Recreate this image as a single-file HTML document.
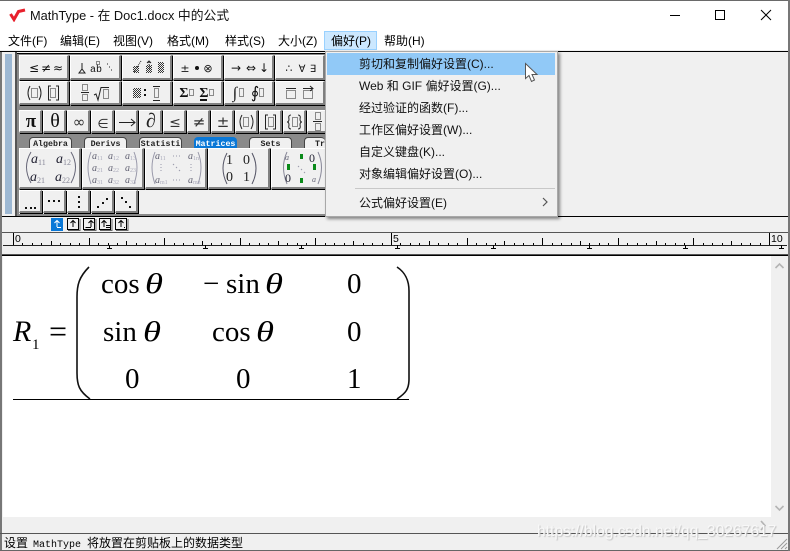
<!DOCTYPE html>
<html><head><meta charset="utf-8"><style>
html,body{margin:0;padding:0;width:790px;height:551px;overflow:hidden;background:#f0f0f0}
body{position:relative;font-family:"Liberation Sans","Noto Sans CJK SC",sans-serif;font-size:12px;color:#000}
.a{position:absolute}
.t{position:absolute;white-space:nowrap;line-height:16px}
.b{position:absolute;box-sizing:border-box;background:#f0f0f0;border-top:1px solid #fff;border-left:1px solid #fff;border-right:2px solid #808080;border-bottom:2px solid #808080;box-shadow:1px 1px 0 #000}
.tab{position:absolute;top:137px;height:11px;width:43px;box-sizing:border-box;background:#f0f0f0;border:1px solid #444;border-bottom:0;border-radius:4px 4px 0 0;font:bold 8.3px/13px "Liberation Mono",monospace;text-align:center;overflow:hidden;color:#222}
.m{position:absolute;left:359px;font-size:12px;line-height:18px;white-space:nowrap;color:#111}
</style></head><body>
<div class="a" style="left:0;top:0;width:790px;height:30px;background:#fff;border-top:1px solid #6a6a6a;box-sizing:border-box"></div>
<div class="a" style="left:0;top:30px;width:790px;height:20px;background:#fff"></div>
<svg class="a" style="left:8px;top:8px" width="18" height="14"><path d="M2.5 6 L6 11.5 L10.5 3.5 L17 2" fill="none" stroke="#e8202c" stroke-width="3"/></svg>
<div class="t" style="left:30px;top:8px;font-size:12.8px;color:#111">MathType - 在 Doc1.docx 中的公式</div>
<svg class="a" style="left:660px;top:5px" width="120" height="20"><path d="M10 10.5H20" stroke="#000" fill="none"/><rect x="55.5" y="5.5" width="9" height="9" fill="none" stroke="#000"/><path d="M101 5L111 15M111 5L101 15" stroke="#000" fill="none"/></svg>

<div class="t" style="left:8px;top:33px">文件(F)</div>
<div class="t" style="left:60px;top:33px">编辑(E)</div>
<div class="t" style="left:113px;top:33px">视图(V)</div>
<div class="t" style="left:167px;top:33px">格式(M)</div>
<div class="t" style="left:225px;top:33px">样式(S)</div>
<div class="t" style="left:278px;top:33px">大小(Z)</div>
<div class="a" style="left:324px;top:31px;width:53px;height:19px;background:#cce8ff;border:1px solid #99d1ff;box-sizing:border-box"></div>
<div class="t" style="left:331px;top:33px">偏好(P)</div>
<div class="t" style="left:384px;top:33px">帮助(H)</div>
<div class="a" style="left:0;top:51px;width:790px;height:1px;background:#000"></div>

<!-- toolbar -->
<div class="a" style="left:5px;top:54px;width:7px;height:160px;background:#9db8d3"></div>
<div class="a" style="left:15px;top:52px;width:2px;height:164px;background:#555"></div>
<div class="a" style="left:17px;top:53px;width:308px;height:163px;background:#8a8a8a;border-top:1px solid #000;box-sizing:border-box"></div>

<div class="b" style="left:19px;top:55px;width:50px;height:25px"></div>
<div class="b" style="left:70px;top:55px;width:51px;height:25px"></div>
<div class="b" style="left:122px;top:55px;width:50px;height:25px"></div>
<div class="b" style="left:173px;top:55px;width:50px;height:25px"></div>
<div class="b" style="left:224px;top:55px;width:50px;height:25px"></div>
<div class="b" style="left:275px;top:55px;width:50px;height:25px"></div>
<div class="b" style="left:19px;top:81px;width:50px;height:24px"></div>
<div class="b" style="left:70px;top:81px;width:51px;height:24px"></div>
<div class="b" style="left:122px;top:81px;width:50px;height:24px"></div>
<div class="b" style="left:173px;top:81px;width:50px;height:24px"></div>
<div class="b" style="left:224px;top:81px;width:50px;height:24px"></div>
<div class="b" style="left:275px;top:81px;width:50px;height:24px"></div>

<div class="b" style="left:19px;top:110px;width:23px;height:23px"></div>
<div class="b" style="left:43px;top:110px;width:23px;height:23px"></div>
<div class="b" style="left:67px;top:110px;width:23px;height:23px"></div>
<div class="b" style="left:91px;top:110px;width:23px;height:23px"></div>
<div class="b" style="left:115px;top:110px;width:23px;height:23px"></div>
<div class="b" style="left:139px;top:110px;width:23px;height:23px"></div>
<div class="b" style="left:163px;top:110px;width:23px;height:23px"></div>
<div class="b" style="left:187px;top:110px;width:23px;height:23px"></div>
<div class="b" style="left:211px;top:110px;width:23px;height:23px"></div>
<div class="b" style="left:235px;top:110px;width:23px;height:23px"></div>
<div class="b" style="left:259px;top:110px;width:23px;height:23px"></div>
<div class="b" style="left:283px;top:110px;width:23px;height:23px"></div>
<div class="b" style="left:307px;top:110px;width:18px;height:23px;border-right:0"></div>

<div class="tab" style="left:29px">Algebra</div>
<div class="tab" style="left:84px">Derivs</div>
<div class="tab" style="left:139px">Statisti</div>
<div class="tab" style="left:194px;background:#0a78d7;color:#fff;border-color:#0a78d7">Matrices</div>
<div class="tab" style="left:249px">Sets</div>
<div class="tab" style="left:304px;width:21px;border-right:0;text-align:left;padding-left:10px">Tr</div>

<div class="b" style="left:19px;top:148px;width:62px;height:41px"></div>
<div class="b" style="left:82px;top:148px;width:62px;height:41px"></div>
<div class="b" style="left:145px;top:148px;width:62px;height:41px"></div>
<div class="b" style="left:208px;top:148px;width:62px;height:41px"></div>
<div class="b" style="left:271px;top:148px;width:54px;height:41px;border-right:0"></div>

<div class="a" style="left:19px;top:190px;width:306px;height:24px;background:#f0f0f0"></div>
<div class="b" style="left:19px;top:190px;width:23px;height:23px"></div>
<div class="b" style="left:43px;top:190px;width:23px;height:23px"></div>
<div class="b" style="left:67px;top:190px;width:23px;height:23px"></div>
<div class="b" style="left:91px;top:190px;width:23px;height:23px"></div>
<div class="b" style="left:115px;top:190px;width:23px;height:23px"></div>

<svg class="a" style="left:0;top:0" width="330" height="220" font-family="DejaVu Sans,sans-serif" text-anchor="middle" fill="#111">
 <defs>
  <pattern id="h" width="2" height="2" patternUnits="userSpaceOnUse"><rect width="1" height="1" fill="#333"/><rect x="1" y="1" width="1" height="1" fill="#333"/></pattern>
 </defs>
 <!-- row 1 -->
 <g font-size="12">
  <text x="34" y="72">≤</text><text x="46" y="72">≠</text><text x="58" y="72">≈</text>
  <text x="185" y="72" font-size="11">±</text><circle cx="197" cy="68" r="2"/><text x="208" y="72" font-size="11">⊗</text>
  <text x="236" y="72">→</text><text x="251" y="72">⇔</text><text x="264" y="72">↓</text>
  <text x="289" y="72" font-size="11">∴</text><text x="302" y="72" font-size="10">∀</text><text x="313" y="72" font-size="10">∃</text>
 </g>
 <g fill="none" stroke="#222">
  <path d="M82 63V69M79 73H85L82 69Z"/><rect x="96.500" y="61.500" width="3" height="3" stroke-dasharray="1 1"/>
  <path d="M107 64h1M109 67h1M111 70h1"/>
  <path d="M141 61L134 72" stroke-dasharray="1 1"/><path d="M149 62V70" stroke-dasharray="1 1"/><path d="M147 63L149 61L151 63"/>
 </g>
 <text x="96" y="72" font-family="Liberation Mono,monospace" font-size="10">ab</text>
 <rect x="133" y="66" width="6" height="7" fill="url(#h)"/>
 <rect x="146" y="65" width="6" height="8" fill="url(#h)"/>
 <rect x="158" y="62" width="6" height="11" fill="url(#h)"/>
 <!-- row 2 -->
 <g fill="none" stroke="#222" stroke-dasharray="1 1">
  <rect x="31.500" y="88.500" width="6" height="9"/><rect x="50.500" y="88.500" width="5" height="9"/>
  <rect x="82.500" y="84.500" width="5" height="6"/><rect x="82.500" y="94.500" width="5" height="6"/>
  <rect x="103.500" y="89.500" width="5" height="9"/>
  <rect x="154.500" y="88.500" width="4" height="9"/>
  <rect x="189.500" y="89.500" width="4" height="6"/><rect x="209.500" y="89.500" width="4" height="6"/>
  <rect x="239.500" y="88.500" width="4" height="8"/><rect x="259.500" y="88.500" width="4" height="8"/>
  <rect x="286.500" y="90.500" width="9" height="8"/><rect x="303.500" y="90.500" width="9" height="8"/>
 </g>
 <g fill="none" stroke="#222">
  <path d="M30 86Q26 93 30 100M39 86Q43 93 39 100"/>
  <path d="M51 86H48.500V100H51M56 86H58.500V100H56"/>
  <path d="M81 92.500H89"/>
  <path d="M94 95L96 94L98 100L101 87.500H109"/>
  <path d="M153 86.500H160M153 100.500H160"/>
  <path d="M286 88.500H296M303 88.500H313M310 86L313 88.500L310 91"/>
 </g>
 <rect x="133" y="88" width="8" height="10" fill="url(#h)"/>
 <rect x="144" y="89" width="2" height="2"/><rect x="144" y="94" width="2" height="2"/>
 <g font-family="Liberation Serif,serif" font-weight="bold">
  <text x="184" y="97" font-size="14">Σ</text><text x="204" y="97" font-size="14">Σ</text>
 </g>
 <rect x="200" y="99" width="7" height="2"/>
 <g font-family="Liberation Serif,serif" font-size="16">
  <text x="235" y="98">∫</text><text x="255" y="98">∮</text>
 </g>
 <!-- row 3 -->
 <text x="31" y="127" font-family="Liberation Serif,serif" font-size="19" font-weight="bold">π</text>
 <text x="55" y="127" font-family="Liberation Serif,serif" font-size="20">θ</text>
 <text x="79" y="127" font-size="15" fill="#333">∞</text>
 <text x="103" y="128" font-size="13" fill="#333">∈</text>
 <path d="M119 122.500H135M131 119L135 122.500L131 126" fill="none" stroke="#222"/>
 <text x="151" y="127" font-family="Liberation Serif,serif" font-size="20" fill="#222">∂</text>
 <text x="175" y="127" font-size="14" fill="#333">≤</text>
 <text x="199" y="127" font-size="15" fill="#333">≠</text>
 <text x="223" y="127" font-size="15" fill="#333">±</text>
 <g fill="none" stroke="#222">
  <path d="M242 115Q238 122 242 129M251 115Q255 122 251 129"/>
  <path d="M268 115H265.500V129H268M273 115H275.500V129H273"/>
  <path d="M291 115Q288 115 289 119Q289 122 287 122Q289 122 289 125Q288 129 291 129M298 115Q301 115 300 119Q300 122 302 122Q300 122 300 125Q301 129 298 129"/>
  <path d="M313 121.500H322"/>
  <g stroke-dasharray="1 1"><rect x="243.500" y="117.500" width="5" height="9"/><rect x="268.500" y="117.500" width="5" height="9"/><rect x="292.500" y="117.500" width="5" height="9"/><rect x="315.500" y="112.500" width="5" height="7"/><rect x="315.500" y="123.500" width="5" height="7"/></g>
 </g>
 <!-- matrices -->
 <g font-family="Liberation Serif,serif" text-anchor="start">
  <path d="M31 152Q22 167 31 183M71 152Q80 167 71 183" fill="none" stroke="#667"/>
  <g fill="#223" font-size="14" font-style="italic">
   <text x="31" y="163">a</text><text x="56" y="163">a</text><text x="30" y="181">a</text><text x="55" y="181">a</text>
  </g>
  <g fill="#889" font-size="8">
   <text x="38" y="165">11</text><text x="63" y="165">12</text><text x="37" y="183">21</text><text x="62" y="183">22</text>
  </g>
  <path d="M91 152Q85 167 91 184M134 152Q140 167 134 184M155 152Q149 167 155 184M198 152Q204 167 198 184" fill="none" stroke="#99a"/>
  <g fill="#667" font-size="10" font-style="italic">
   <text x="92" y="159">a</text><text x="108" y="159">a</text><text x="125" y="159">a</text>
   <text x="92" y="171">a</text><text x="108" y="171">a</text><text x="125" y="171">a</text>
   <text x="92" y="183">a</text><text x="108" y="183">a</text><text x="125" y="183">a</text>
   <text x="155" y="159">a</text><text x="188" y="159">a</text><text x="155" y="183">a</text><text x="188" y="183">a</text>
  </g>
  <g fill="#aab" font-size="6">
   <text x="97" y="160">11</text><text x="113" y="160">12</text><text x="130" y="160">13</text>
   <text x="97" y="172">21</text><text x="113" y="172">22</text><text x="130" y="172">23</text>
   <text x="97" y="184">31</text><text x="113" y="184">32</text><text x="130" y="184">33</text>
   <text x="160" y="160">11</text><text x="193" y="160">1n</text><text x="160" y="184">m1</text><text x="193" y="184">mn</text>
  </g>
  <path d="M173 156h1M176 156h1M179 156h1M173 180h1M176 180h1M179 180h1M161 164v1M161 167v1M161 170v1M191 164v1M191 167v1M191 170v1M173 164l1 1M176 167l1 1M179 170l1 1" stroke="#99a" fill="none"/>
  <path d="M227 153Q219 168 227 184M252 153Q260 168 252 184" fill="none" stroke="#556"/>
  <g font-size="14" fill="#222"><text x="226" y="164">1</text><text x="243" y="164">0</text><text x="226" y="181">0</text><text x="243" y="181">1</text></g>
  <path d="M287 152Q280 167 287 184M318 152Q325 167 318 184" fill="none" stroke="#889"/>
  <text x="285" y="160" font-size="8" font-style="italic" fill="#667">a</text>
  <text x="309" y="162" font-size="12" fill="#223">0</text>
  <text x="285" y="182" font-size="12" fill="#223">0</text>
  <text x="312" y="182" font-size="8" font-style="italic" fill="#667">a</text>
  <rect x="300" y="154" width="3" height="5" fill="#0a8a1a"/><rect x="287" y="164" width="3" height="6" fill="#0a8a1a"/><rect x="313" y="164" width="3" height="6" fill="#0a8a1a"/><rect x="300" y="178" width="3" height="5" fill="#0a8a1a"/>
  <path d="M298 166l1 1M301 169l1 1M304 172l1 1" stroke="#99a" fill="none"/>
 </g>
 <!-- dots -->
 <g fill="#111">
  <rect x="25" y="207" width="2" height="2"/><rect x="30" y="207" width="2" height="2"/><rect x="34" y="207" width="2" height="2"/>
  <rect x="48" y="200" width="2" height="2"/><rect x="53" y="200" width="2" height="2"/><rect x="58" y="200" width="2" height="2"/>
  <rect x="78" y="196" width="2" height="2"/><rect x="78" y="201" width="2" height="2"/><rect x="78" y="206" width="2" height="2"/>
  <rect x="97" y="206" width="2" height="2"/><rect x="102" y="202" width="2" height="2"/><rect x="106" y="198" width="2" height="2"/>
  <rect x="121" y="197" width="2" height="2"/><rect x="125" y="201" width="2" height="2"/><rect x="129" y="206" width="2" height="2"/>
 </g>
</svg>

<div class="a" style="left:0;top:216px;width:790px;height:1px;background:#000"></div>

<!-- small toolbar -->
<svg class="a" style="left:50px;top:217px" width="80" height="15" fill="none">
 <rect x="1" y="1" width="12" height="13" fill="#0a78d7"/>
 <path d="M7 10V3.500M4.500 6L7 3.500L9.500 6M7 10.500H11" stroke="#fff"/>
 <g fill="#f0f0f0" stroke="#000">
  <rect x="17.500" y="1.500" width="11" height="11"/><rect x="33.500" y="1.500" width="11" height="11"/><rect x="49.500" y="1.500" width="11" height="11"/><rect x="65.500" y="1.500" width="11" height="11"/>
 </g>
 <path d="M18 13.500H30V2M34 13.500H46V2M50 13.500H62V2M66 13.500H78V2" stroke="#666"/>
 <path stroke="#000" d="M23 10V4M20.500 6L23 3.500L25.500 6"/>
 <path stroke="#000" d="M41 10V4M38.500 6L41 3.500L43.500 6M35.500 10.500H41"/>
 <path stroke="#000" d="M54 10V4M51.500 6L54 3.500L56.500 6M56 8.500H60M56 10.500H60"/>
 <path stroke="#000" d="M71 10V4M68.500 6L71 3.500L73.500 6M74 10.500h1"/>
</svg>

<!-- ruler -->
<div class="a" style="left:0;top:232px;width:790px;height:1px;background:#555"></div>
<svg class="a" style="left:0;top:233px" width="790" height="23" fill="none">
 <path d="M3 12.500H787" stroke="#222"/>
 <path stroke="#000" d="M13.500 0V12 M22.500 10V12 M32.500 10V12 M41.500 10V12 M51.500 8V12 M60.500 10V12 M70.500 10V12 M79.500 10V12 M89.500 5V12 M98.500 10V12 M108.500 10V12 M117.500 10V12 M126.500 8V12 M136.500 10V12 M145.500 10V12 M155.500 10V12 M164.500 5V12 M174.500 10V12 M183.500 10V12 M193.500 10V12 M202.500 8V12 M211.500 10V12 M221.500 10V12 M230.500 10V12 M240.500 5V12 M249.500 10V12 M259.500 10V12 M268.500 10V12 M278.500 8V12 M287.500 10V12 M297.500 10V12 M306.500 10V12 M315.500 5V12 M325.500 10V12 M334.500 10V12 M344.500 10V12 M353.500 8V12 M363.500 10V12 M372.500 10V12 M382.500 10V12 M391.500 0V12 M400.500 10V12 M410.500 10V12 M419.500 10V12 M429.500 8V12 M438.500 10V12 M448.500 10V12 M457.500 10V12 M467.500 5V12 M476.500 10V12 M486.500 10V12 M495.500 10V12 M504.500 8V12 M514.500 10V12 M523.500 10V12 M533.500 10V12 M542.500 5V12 M552.500 10V12 M561.500 10V12 M571.500 10V12 M580.500 8V12 M589.500 10V12 M599.500 10V12 M608.500 10V12 M618.500 5V12 M627.500 10V12 M637.500 10V12 M646.500 10V12 M656.500 8V12 M665.500 10V12 M675.500 10V12 M684.500 10V12 M693.500 5V12 M703.500 10V12 M712.500 10V12 M722.500 10V12 M731.500 8V12 M741.500 10V12 M750.500 10V12 M760.500 10V12 M769.500 0V12"/>
 <path stroke="#000" d="M109.500 12V15M107 15.500H112M205.500 12V15M203 15.500H208M301.500 12V15M299 15.500H304M397.500 12V15M395 15.500H400M493.500 12V15M491 15.500H496M589.500 12V15M587 15.500H592M685.500 12V15M683 15.500H688M781.500 12V15M779 15.500H784"/>
 <path stroke="#555" d="M0 21.500H790"/>
 <path stroke="#000" d="M0 22.500H790"/>
 <g fill="#000" font-family="Liberation Sans,sans-serif" font-size="10.500"><text x="15" y="9">0</text><text x="393" y="9">5</text><text x="771" y="9">10</text></g>
</svg>

<!-- document -->
<div class="a" style="left:3px;top:256px;width:768px;height:261px;background:#fff"></div>
<div class="a" style="left:0;top:52px;width:2px;height:499px;background:#777"></div>
<svg class="a" style="left:0;top:255px" width="420" height="150" font-family="Liberation Serif,serif" fill="#000" font-size="29">
 <text x="13" y="86" font-style="italic" font-size="30">R</text><text x="32" y="94" font-size="15">1</text>
 <text x="49" y="87" font-size="32">=</text>
 <text x="101" y="38">cos</text><text x="145" y="38" font-style="italic" textLength="18" lengthAdjust="spacingAndGlyphs">θ</text>
 <text x="203" y="38">−</text><text x="226" y="38">sin</text><text x="265" y="38" font-style="italic" textLength="18" lengthAdjust="spacingAndGlyphs">θ</text>
 <text x="347" y="38">0</text>
 <text x="103" y="86">sin</text><text x="143" y="86" font-style="italic" textLength="18" lengthAdjust="spacingAndGlyphs">θ</text>
 <text x="212" y="86">cos</text><text x="256" y="86" font-style="italic" textLength="18" lengthAdjust="spacingAndGlyphs">θ</text>
 <text x="347" y="86">0</text>
 <text x="125" y="133">0</text><text x="236" y="133">0</text><text x="347" y="133">1</text>
 <path d="M89 12C79 22 77 30 77 42V118C77 130 79 136 90 144" fill="none" stroke="#111" stroke-width="1.600"/>
 <path d="M397 12C406 18 409 26 409 36V124C409 134 406 138 397 144" fill="none" stroke="#111" stroke-width="1.600"/>
 <path d="M13 144.500H409" stroke="#000" fill="none"/>
</svg>

<!-- scrollbar -->
<svg class="a" style="left:771px;top:256px" width="17" height="262" fill="none" stroke="#b4b4b4" stroke-width="1.600"><path d="M4.500 12L8.500 8L12.500 12"/><path d="M4.500 250L8.500 254L12.500 250"/></svg>
<svg class="a" style="left:755px;top:518px" width="17" height="16" fill="none" stroke="#b4b4b4" stroke-width="1.600"><path d="M6 3L10 7.500L6 12"/></svg>

<!-- status -->
<div class="a" style="left:0;top:533px;width:790px;height:1px;background:#555"></div>
<div class="t" style="left:4px;top:535px;font-family:'WenQuanYi Zen Hei','Noto Sans CJK SC',sans-serif;font-size:12px">设置<span style="font:10px/16px 'Liberation Mono',monospace;margin:0 6px 0 5px">MathType</span>将放置在剪贴板上的数据类型</div>
<div class="a" style="left:0;top:550px;width:790px;height:1px;background:#666"></div>
<div class="a" style="left:788px;top:0;width:2px;height:551px;background:#777"></div>
<svg class="a" style="left:776px;top:537px" width="12" height="13" stroke="#999" fill="none"><path d="M1 12L11 2M5 12L11 6M9 12L11 10"/></svg>
<div class="t" style="left:537px;top:524px;font-size:15.600px;color:#f8f8f8;text-shadow:1px 1px 1px #c4c4c4;font-family:'Liberation Sans',sans-serif">https://blog.csdn.net/qq_30267617</div>

<!-- dropdown -->
<div class="a" style="left:325px;top:51px;width:233px;height:166px;background:#f0f0f0;border:1px solid #a8a8a8;box-sizing:border-box;box-shadow:2px 2px 3px rgba(0,0,0,.45)"></div>
<div class="a" style="left:327px;top:53px;width:228px;height:22px;background:#91c9f7"></div>
<div class="m" style="top:55px">剪切和复制偏好设置(C)...</div>
<div class="m" style="top:77px">Web 和 GIF 偏好设置(G)...</div>
<div class="m" style="top:99px">经过验证的函数(F)...</div>
<div class="m" style="top:121px">工作区偏好设置(W)...</div>
<div class="m" style="top:143px">自定义键盘(K)...</div>
<div class="m" style="top:165px">对象编辑偏好设置(O)...</div>
<div class="a" style="left:355px;top:188px;width:200px;height:1px;background:#c8c8c8"></div>
<div class="m" style="top:194px">公式偏好设置(E)</div>
<svg class="a" style="left:541px;top:197px" width="8" height="10" fill="none" stroke="#555" stroke-width="1.200"><path d="M2 1L6 5L2 9"/></svg>
<svg class="a" style="left:523px;top:62px" width="18" height="22"><path d="M2.500 1.500V16.500L6 13.500L8.500 19.500L11.500 18L9 12.500H14Z" fill="#fff" stroke="#555"/></svg>
</body></html>
